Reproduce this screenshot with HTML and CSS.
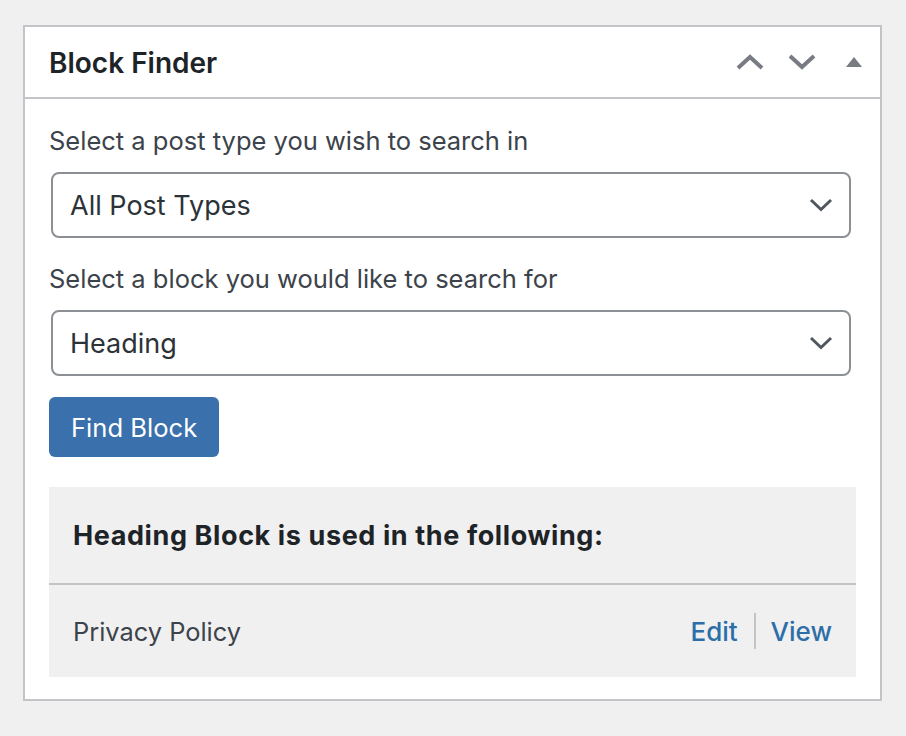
FILE: index.html
```html
<!DOCTYPE html>
<html lang="en">
<head>
<meta charset="utf-8">
<title>Block Finder</title>
<link rel="stylesheet" href="styles.css">
</head>
<body>
<div class="page">
  <div class="card">
    <div class="card-header">
      <h2 class="card-title">Block Finder</h2>
      <div class="handle-actions">
        <span class="handle-btn">
          <svg width="28" height="16" viewBox="0 0 28 16"><polyline points="2,14 14,3 26,14" fill="none" stroke="#787c82" stroke-width="4"/></svg>
        </span>
        <span class="handle-btn">
          <svg width="28" height="16" viewBox="0 0 28 16"><polyline points="2,2 14,13 26,2" fill="none" stroke="#787c82" stroke-width="4"/></svg>
        </span>
        <span class="handle-btn">
          <svg width="16" height="10" viewBox="0 0 16 10"><polygon points="8,0 16,10 0,10" fill="#787c82"/></svg>
        </span>
      </div>
    </div>
    <div class="card-body">
      <p class="field-label label-first">Select a post type you wish to search in</p>
      <div class="select-box">
        <span class="select-value">All Post Types</span>
        <svg class="select-arrow" width="24" height="14" viewBox="0 0 24 14"><polyline points="2,2 12,11.5 22,2" fill="none" stroke="#50575e" stroke-width="3"/></svg>
      </div>
      <p class="field-label">Select a block you would like to search for</p>
      <div class="select-box">
        <span class="select-value">Heading</span>
        <svg class="select-arrow" width="24" height="14" viewBox="0 0 24 14"><polyline points="2,2 12,11.5 22,2" fill="none" stroke="#50575e" stroke-width="3"/></svg>
      </div>
      <button class="find-btn" type="button">Find Block</button>
      <div class="results">
        <h3 class="results-title">Heading Block is used in the following:</h3>
        <div class="result-row">
          <span class="result-name">Privacy Policy</span>
          <span class="row-actions">
            <a class="row-link" href="#">Edit</a>
            <span class="row-sep"></span>
            <a class="row-link" href="#">View</a>
          </span>
        </div>
      </div>
    </div>
  </div>
</div>
</body>
</html>
```
FILE: styles.css
```css
html, body {
  margin: 0;
  padding: 0;
  background: #f0f0f1;
  font-family: Inter, "Noto Sans", sans-serif;
}

.page {
  padding: 25px 0 0 23px;
}

.card {
  box-sizing: border-box;
  width: 859px;
  height: 676px;
  background: #fff;
  border: 2px solid #c3c4c7;
}

.card-header {
  box-sizing: border-box;
  height: 72px;
  display: flex;
  align-items: center;
  justify-content: space-between;
  border-bottom: 2px solid #c3c4c7;
  padding-left: 24px;
}

.card-title {
  margin: 0;
  font-size: 28px;
  font-weight: 600;
  color: #1d2327;
  line-height: 36px;
  padding-top: 2px;
}

.handle-actions {
  display: flex;
  align-items: center;
  height: 100%;
}

.handle-btn {
  width: 52px;
  height: 100%;
  display: flex;
  align-items: center;
  justify-content: center;
}

.card-body {
  padding: 0 24px;
}

.field-label {
  margin: 0 0 15px;
  font-size: 25.5px;
  line-height: 32px;
  color: #3c434a;
}

.label-first {
  margin-top: 26px;
}

.select-box + .field-label {
  margin-top: 25px;
}

.select-box {
  box-sizing: border-box;
  width: 800px;
  height: 66px;
  margin-left: 2px;
  border: 2px solid #8c8f94;
  border-radius: 8px;
  display: flex;
  align-items: center;
  justify-content: space-between;
  padding: 0 16px 0 17px;
}

.select-value {
  font-size: 27px;
  color: #2c3338;
}

.find-btn {
  display: block;
  margin-top: 21px;
  height: 60px;
  padding: 0 22px;
  background: #3a70ab;
  border: none;
  border-radius: 6px;
  color: #fff;
  font-family: inherit;
  font-size: 25.6px;
}

.results {
  margin-top: 30px;
  background: #f0f0f1;
}

.results-title {
  box-sizing: border-box;
  margin: 0;
  height: 98px;
  padding: 0 24px;
  display: flex;
  align-items: center;
  border-bottom: 2px solid #c3c4c7;
  font-size: 27px;
  font-weight: 700;
  letter-spacing: 0.6px;
  color: #1d2327;
}

.result-row {
  height: 92px;
  display: flex;
  align-items: center;
  justify-content: space-between;
  padding: 0 24px;
}

.result-name {
  font-size: 25.4px;
  color: #3c434a;
}

.row-actions {
  display: flex;
  align-items: center;
}

.row-link {
  font-size: 26px;
  font-weight: 500;
  color: #2c6ea8;
  text-decoration: none;
}

.row-sep {
  width: 2px;
  height: 36px;
  background: #c3c4c7;
  margin: 0 15px 0 16px;
}
```
